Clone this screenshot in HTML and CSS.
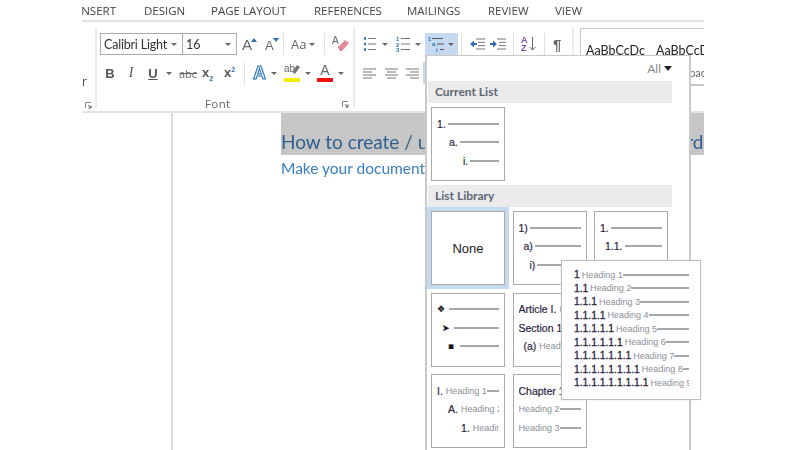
FILE: index.html
```html
<!DOCTYPE html>
<html lang="en">
<head>
    <meta charset="UTF-8">
    <title>Multilevel list</title>
    <link rel="stylesheet" href="styles.css">
</head>
<body>
    <div class="window">
        <div class="tabs">
            <span class="tab tab-insert">INSERT</span>
            <span class="tab tab-design">DESIGN</span>
            <span class="tab tab-layout">PAGE LAYOUT</span>
            <span class="tab tab-refs">REFERENCES</span>
            <span class="tab tab-mail">MAILINGS</span>
            <span class="tab tab-review">REVIEW</span>
            <span class="tab tab-view">VIEW</span>
        </div>

        <div class="ribbon">
            <div class="group group-clip">
                <span class="clip-letter">r</span>
                <svg class="launcher launcher-clip" width="7" height="7" viewBox="0 0 7 7"><path d="M.5 6V.5H6" fill="none" stroke="#888"/><path d="M3 3l3 3M6 3.5V6H3.5" fill="none" stroke="#555"/></svg>
            </div>

            <div class="group group-font">
                <div class="tool-row">
                    <div class="select font-name"><span>Calibri Light</span><i class="caret"></i></div>
                    <div class="select font-size"><span>16</span><i class="caret"></i></div>
                    <span class="tool-a grow">A<svg width="6" height="4" viewBox="0 0 6 4"><path d="M3 0l3 4H0z" fill="#2b6fb5"/></svg></span>
                    <span class="tool-a shrink">A<svg width="6" height="4" viewBox="0 0 6 4"><path d="M3 4L0 0h6z" fill="#2b6fb5"/></svg></span>
                    <i class="sep sep-a"></i>
                    <span class="change-case">Aa</span>
                    <i class="caret caret-case"></i>
                    <i class="sep sep-b"></i>
                    <svg class="eraser" width="18" height="18" viewBox="0 0 18 18">
                        <text x="0" y="9" font-size="10" fill="#666" font-family="Liberation Sans">A</text>
                        <path d="M6 12l7-7 4 3-7 8H8z" fill="#e58a9a"/>
                        <path d="M6 12l3 3" stroke="#c96a7c"/>
                    </svg>
                </div>
                <div class="tool-row row-two">
                    <b class="fmt fmt-b">B</b>
                    <i class="fmt fmt-i">I</i>
                    <u class="fmt fmt-u">U</u>
                    <i class="caret caret-u"></i>
                    <s class="fmt-abc">abc</s>
                    <span class="script sub">x<sub>2</sub></span>
                    <span class="script sup">x<sup>2</sup></span>
                    <i class="sep sep-c"></i>
                    <span class="effect">A</span>
                    <i class="caret caret-fx"></i>
                    <span class="marker">
                        <span class="marker-text">ab</span>
                        <svg class="marker-pen" width="9" height="11" viewBox="0 0 9 11"><path d="M1 8l5-7 3 2-5 7z" fill="#777"/></svg>
                        <i class="bar bar-yellow"></i>
                    </span>
                    <i class="caret caret-marker"></i>
                    <span class="marker marker-font">
                        <span class="letter-a">A</span>
                        <i class="bar bar-red"></i>
                    </span>
                    <i class="caret caret-color"></i>
                </div>
                <div class="group-foot">
                    <span class="group-label">Font</span>
                    <svg class="launcher" width="7" height="7" viewBox="0 0 7 7"><path d="M.5 6V.5H6" fill="none" stroke="#888"/><path d="M3 3l3 3M6 3.5V6H3.5" fill="none" stroke="#555"/></svg>
                </div>
            </div>

            <div class="group group-para">
                <div class="tool-row">
                    <svg class="list-bullets" width="13" height="16" viewBox="0 0 13 16">
                        <path d="M1 2.500h2M1 8h2M1 13.500h2" stroke="#2b6fb5" stroke-width="2.400"/>
                        <path d="M5 2.500h8M5 8h8M5 13.500h8" stroke="#777"/>
                    </svg>
                    <i class="caret caret-bul"></i>
                    <svg class="list-numbers" width="14" height="16" viewBox="0 0 14 16" font-family="Liberation Sans" font-size="6" font-weight="bold" fill="#2b6fb5">
                        <text x="0" y="5">1</text><text x="0" y="10.500">2</text><text x="0" y="16">3</text>
                        <path d="M5 2.500h9M5 8h9M5 13.500h9" stroke="#777"/>
                    </svg>
                    <i class="caret caret-num"></i>
                    <div class="multilevel">
                        <svg width="20" height="18" viewBox="0 0 20 18" font-family="Liberation Sans" font-size="6" font-weight="bold" fill="#2b6fb5">
                            <text x="0" y="6">1</text><text x="4" y="11">a</text><text x="8" y="17">i</text>
                            <path d="M4 3.500h11M9 9h7M12 14.500h4" stroke="#555"/>
                        </svg>
                        <i class="caret"></i>
                    </div>
                    <i class="sep sep-d"></i>
                    <svg class="outdent" width="15" height="12" viewBox="0 0 15 12">
                        <path d="M6 1h9M8 4.300h7M8 7.600h7M6 11h9" stroke="#777"/>
                        <path d="M0 6l4-3.500V5h3v2H4v2.500z" fill="#2b6fb5"/>
                    </svg>
                    <svg class="indent" width="16" height="12" viewBox="0 0 16 12">
                        <path d="M7 1h9M9 4.300h7M9 7.600h7M7 11h9" stroke="#777"/>
                        <path d="M7 6L3 2.500V5H0v2h3v2.500z" fill="#2b6fb5"/>
                    </svg>
                    <i class="sep sep-e"></i>
                    <span class="sort"><span class="sort-letters">A<br>Z</span>
                        <svg width="7" height="14" viewBox="0 0 7 14"><path d="M3.500 0v13M.5 10l3 3 3-3" fill="none" stroke="#666"/></svg>
                    </span>
                    <i class="sep sep-f"></i>
                    <span class="pilcrow">¶</span>
                </div>
                <div class="tool-row row-two">
                    <svg class="align" width="13" height="11" viewBox="0 0 13 11"><path d="M0 1h13M0 4h9M0 7h13M0 10h9" stroke="#777"/></svg>
                    <svg class="align align-center" width="13" height="11" viewBox="0 0 13 11"><path d="M0 1h13M2 4h9M0 7h13M2 10h9" stroke="#777"/></svg>
                    <svg class="align align-right" width="13" height="11" viewBox="0 0 13 11"><path d="M0 1h13M4 4h9M0 7h13M4 10h9" stroke="#777"/></svg>
                    <i class="justify"></i>
                </div>
            </div>

            <div class="styles">
                <div class="style-samples"><span>AaBbCcDc</span><span>AaBbCcDc</span></div>
                <div class="style-names">No Spacing</div>
            </div>
        </div>

        <div class="workspace">
            <div class="page">
                <h1 class="doc-title">How to create / use multi-level lists in Office Word</h1>
                <p class="doc-subtitle">Make your document look professional</p>
            </div>
        </div>

        <div class="gallery">
            <div class="gallery-filter">All <i class="caret caret-all"></i></div>
            <div class="gallery-head">Current List</div>
            <div class="thumb thumb-current">
                <div class="thumb-row"><span class="num">1.</span><i class="rule"></i></div>
                <div class="thumb-row in-1"><span class="num">a.</span><i class="rule"></i></div>
                <div class="thumb-row in-2"><span class="num">i.</span><i class="rule"></i></div>
            </div>
            <div class="gallery-head">List Library</div>
            <div class="thumb-grid">
                <div class="thumb thumb-none">None</div>
                <div class="thumb">
                    <div class="thumb-row"><span class="num">1)</span><i class="rule"></i></div>
                    <div class="thumb-row in-s1"><span class="num">a)</span><i class="rule"></i></div>
                    <div class="thumb-row in-s2"><span class="num">i)</span><i class="rule"></i></div>
                </div>
                <div class="thumb">
                    <div class="thumb-row"><span class="num">1.</span><i class="rule"></i></div>
                    <div class="thumb-row in-s1"><span class="num">1.1.</span><i class="rule"></i></div>
                    <div class="thumb-row in-s2"><span class="num">1.1.1.</span><i class="rule"></i></div>
                </div>
                <div class="thumb">
                    <div class="thumb-row"><span class="num sym">❖</span><i class="rule"></i></div>
                    <div class="thumb-row in-s1"><span class="num sym">➤</span><i class="rule"></i></div>
                    <div class="thumb-row in-s2"><span class="num sym">▪</span><i class="rule"></i></div>
                </div>
                <div class="thumb">
                    <div class="thumb-row"><span class="num">Article I.</span><span class="hd">Heading 1</span></div>
                    <div class="thumb-row"><span class="num">Section 1.01</span><span class="hd">Heading 2</span></div>
                    <div class="thumb-row in-s1"><span class="num">(a)</span><span class="hd">Heading 3</span></div>
                </div>
                <div class="thumb thumb-empty"></div>
                <div class="thumb">
                    <div class="thumb-row"><span class="num">I.</span><span class="hd">Heading 1</span><i class="rule"></i></div>
                    <div class="thumb-row in-3"><span class="num">A.</span><span class="hd">Heading 2</span></div>
                    <div class="thumb-row in-4"><span class="num">1.</span><span class="hd">Heading 3</span></div>
                </div>
                <div class="thumb">
                    <div class="thumb-row"><span class="num">Chapter 1</span><span class="hd">Heading 1</span></div>
                    <div class="thumb-row"><span class="hd">Heading 2</span><i class="rule"></i></div>
                    <div class="thumb-row"><span class="hd">Heading 3</span><i class="rule"></i></div>
                </div>
            </div>
        </div>

        <div class="preview">
            <div class="preview-row"><b>1</b><span>Heading 1</span><i></i></div>
            <div class="preview-row"><b>1.1</b><span>Heading 2</span><i></i></div>
            <div class="preview-row"><b>1.1.1</b><span>Heading 3</span><i></i></div>
            <div class="preview-row"><b>1.1.1.1</b><span>Heading 4</span><i></i></div>
            <div class="preview-row"><b>1.1.1.1.1</b><span>Heading 5</span><i></i></div>
            <div class="preview-row"><b>1.1.1.1.1.1</b><span>Heading 6</span><i></i></div>
            <div class="preview-row"><b>1.1.1.1.1.1.1</b><span>Heading 7</span><i></i></div>
            <div class="preview-row"><b>1.1.1.1.1.1.1.1</b><span>Heading 8</span><i></i></div>
            <div class="preview-row"><b>1.1.1.1.1.1.1.1.1</b><span>Heading 9</span><i></i></div>
        </div>
    </div>
</body>
</html>
```
FILE: styles.css
```css
:root {
    --line: #dcdcdc;
    --frame: #c9c9c9;
    --icon: #666;
    --blue: #2b6fb5;
    --hover: #c5d9f1;
}

* {
    margin: 0;
    padding: 0;
    box-sizing: border-box;
}

html, body {
    height: 100%;
    overflow: hidden;
    background: white;
}

/* App window, cropped on both sides */
.window {
    position: relative;
    width: 622px;
    height: 450px;
    margin-left: 82px;
    overflow: hidden;
    font-family: 'Open Sans', sans-serif;
    color: #444;
    filter: blur(0.35px);
}

/* Tabs */
.tabs {
    display: flex;
    height: 22px;
    border-bottom: 2px solid #e2e2e2;
    font-size: 11.5px;
    line-height: 21px;
    white-space: nowrap;
}

.tab-insert { width: 62px; overflow: hidden; text-indent: -4px; }
.tab-design { width: 67px; }
.tab-layout { width: 103px; }
.tab-refs { width: 93px; }
.tab-mail { width: 81px; }
.tab-review { width: 67px; }

/* Ribbon */
.ribbon {
    display: flex;
    height: 91px;
    border-bottom: 2px solid #e2e2e2;
    padding-top: 5px;
}

.group {
    position: relative;
    border-right: 2px solid #ececec;
    height: 81px;
}

.group-clip { width: 15px; font-size: 12px; }
.clip-letter { display: block; margin-top: 47px; line-height: 16px; }
.launcher-clip { display: block; margin: 12px 0 0 3px; }

.group-font { width: 258px; padding: 6px 0 0 3px; }
.group-para { width: 219px; padding: 6px 0 0 8px; }

.tool-row {
    display: flex;
    align-items: center;
    height: 22px;
}

.row-two { margin-top: 7px; }

.caret {
    display: block;
    flex: none;
    width: 0;
    height: 0;
    border: 3px solid transparent;
    border-top: 3.5px solid var(--icon);
    border-bottom: 0;
}

.sep {
    display: block;
    flex: none;
    width: 1px;
    height: 22px;
    background: #e0e0e0;
}

/* Font group */
.select {
    display: flex;
    align-items: center;
    justify-content: space-between;
    height: 22px;
    border: 1px solid #ababab;
    padding: 0 5px 0 3px;
    font-family: Lato, sans-serif;
    font-size: 12.5px;
    color: #333;
    white-space: nowrap;
}

.font-name { width: 83px; letter-spacing: -0.2px; }
.font-size { width: 54px; border-left: 0; padding-left: 3px; }

.tool-a {
    display: flex;
    align-items: flex-start;
    font-family: 'Liberation Sans', sans-serif;
    color: #666;
}

.grow { font-size: 15px; margin-left: 5px; width: 16px; }
.shrink { font-size: 13px; margin-left: 7px; width: 14px; padding-top: 3px; }
.tool-a svg { flex: none; margin-top: 2px; }
.grow svg { margin-left: -1px; }
.shrink svg { margin-left: -1px; margin-top: 0; }

.sep-a { margin-left: 4px; }
.change-case { width: 16px; margin-left: 7px; font-size: 13px; color: #666; line-height: 20px; }
.caret-case { margin-left: 2px; }
.sep-b { margin-left: 9px; }
.eraser { flex: none; margin-left: 7px; }

.fmt {
    width: 12px;
    text-align: center;
    font-family: 'Liberation Sans', sans-serif;
    font-size: 13px;
    color: #555;
}

.fmt-b { margin-left: 4px; }
.fmt-i { margin-left: 9px; font-family: 'Liberation Serif', serif; font-size: 14px; }
.fmt-u { margin-left: 10px; font-weight: bold; }
.caret-u { margin-left: 7px; }
.fmt-abc { width: 16px; margin-left: 7px; font-size: 11px; color: #666; }

.script {
    width: 13px;
    font-family: 'Liberation Sans', sans-serif;
    font-size: 13px;
    font-weight: bold;
    color: #555;
    line-height: 16px;
}

.script sub, .script sup { font-size: 7px; line-height: 0; color: var(--blue); }
.sub { margin-left: 7px; }
.sup { margin-left: 9px; width: 12px; }
.sep-c { margin-left: 8px; }

.effect {
    width: 14px;
    margin-left: 8px;
    font-family: 'Liberation Sans', sans-serif;
    font-size: 18px;
    font-weight: bold;
    line-height: 20px;
    color: #dfeaf7;
    -webkit-text-stroke: 1px var(--blue);
}

.caret-fx { margin-left: 4px; }

.marker {
    position: relative;
    display: block;
    flex: none;
    width: 16px;
    height: 20px;
    margin-left: 7px;
}

.marker-text {
    display: block;
    font-family: 'Liberation Sans', sans-serif;
    font-size: 10px;
    line-height: 12px;
    color: #666;
}

.marker-pen { position: absolute; top: 1px; right: 0; }

.bar {
    position: absolute;
    left: 0;
    bottom: 1px;
    width: 16px;
    height: 4px;
}

.bar-yellow { background: #f5ee00; }
.bar-red { background: #ee1111; }
.caret-marker { margin-left: 5px; }
.marker-font { margin-left: 6px; }
.letter-a {
    display: block;
    text-align: center;
    font-family: 'Liberation Sans', sans-serif;
    font-size: 14px;
    line-height: 15px;
    color: #666;
}
.caret-color { margin-left: 5px; }

.group-foot {
    display: flex;
    align-items: center;
    justify-content: space-between;
    height: 14px;
    margin-top: 13px;
    padding: 0 4px 0 105px;
    line-height: 14px;
}

.group-label { font-size: 11.5px; letter-spacing: 0.4px; color: #666; }

/* Paragraph group */
.group-para svg { flex: none; }
.caret-bul { margin-left: 6px; }
.list-numbers { margin-left: 8px; }
.caret-num { margin-left: 5px; }

.multilevel {
    display: flex;
    align-items: center;
    flex: none;
    width: 33px;
    height: 22px;
    margin-left: 4px;
    padding-left: 3px;
    background: var(--hover);
}

.sep-d { margin-left: 3px; }
.group-para .outdent { margin-left: 8px; }
.group-para .indent { margin-left: 5px; }
.sep-e { margin-left: 7px; }

.sort {
    display: flex;
    align-items: center;
    flex: none;
    width: 16px;
    margin-left: 7px;
}

.sort-letters {
    font-family: 'Liberation Sans', sans-serif;
    font-size: 9px;
    font-weight: bold;
    line-height: 8px;
    color: #7b4fb0;
    margin-right: 1px;
}

.sep-f { margin-left: 7px; }
.pilcrow { margin-left: 8px; font-family: 'Liberation Sans', sans-serif; font-size: 15px; font-weight: bold; color: #666; }
.group-para .align-center { margin-left: 9px; }
.group-para .align-right { margin-left: 8px; }
.justify { display: block; flex: none; width: 22px; height: 22px; margin-left: 4px; background: var(--hover); }

/* Styles gallery */
.styles {
    flex: 1;
    height: 58px;
    margin: 1px 0 0 6px;
    border: 1px solid #c8c8c8;
    border-right: 0;
    border-bottom: 2px solid #c8c8c8;
    padding: 14px 0 0 5px;
    font-family: Lato, sans-serif;
    color: #222;
    white-space: nowrap;
    overflow: hidden;
}

.style-samples { display: flex; gap: 11px; font-size: 12.5px; }
.style-names { margin: 8px 0 0 80px; font-size: 11px; color: #666; }

/* Document */
.workspace { height: 337px; }

.page {
    width: 519px;
    height: 100%;
    margin-left: 89px;
    border-left: 2px solid var(--line);
    border-right: 2px solid var(--line);
    padding-left: 108px;
    white-space: nowrap;
    font-family: Lato, sans-serif;
}

.doc-title {
    width: 423px;
    height: 42px;
    padding-top: 17px;
    font-size: 19px;
    font-weight: 400;
    line-height: 24px;
    color: #2e5d8f;
    background: #c6c6c6;
    overflow: hidden;
}

.doc-subtitle {
    margin-top: 1px;
    font-size: 15.5px;
    line-height: 24px;
    color: #3a7fc0;
}

/* List gallery dropdown */
.gallery {
    position: absolute;
    left: 343px;
    top: 55px;
    width: 266px;
    height: 400px;
    background: white;
    border: 2px solid var(--frame);
    border-top-width: 1px;
    font-family: 'Liberation Sans', sans-serif;
}

.gallery-filter {
    display: flex;
    align-items: center;
    justify-content: flex-end;
    gap: 3px;
    height: 25px;
    padding-right: 17px;
    font-family: Lato, sans-serif;
    font-size: 12px;
    color: #888;
}

.caret-all {
    border-width: 4px;
    border-top-width: 5px;
    border-bottom: 0;
    border-top-color: #222;
}

.gallery-head {
    width: 244px;
    height: 22px;
    margin: 4px 0 4px 1px;
    padding-left: 7px;
    background: #ebebeb;
    font-family: Lato, sans-serif;
    font-size: 12px;
    font-weight: bold;
    line-height: 22px;
    color: #5d6773;
}

.gallery-filter + .gallery-head { margin-top: 0; }

.thumb {
    display: flex;
    flex-direction: column;
    gap: 5.5px;
    width: 74px;
    height: 74px;
    border: 1px solid #aaa;
    padding: 9px 5px 0;
    font-size: 10.5px;
    color: #2d2440;
    white-space: nowrap;
    overflow: hidden;
}

.thumb-current { margin-left: 4px; }

.thumb-grid {
    display: grid;
    grid-template-columns: repeat(3, 74px);
    gap: 7.5px;
    margin-left: 4px;
}

.thumb-none {
    align-items: center;
    justify-content: center;
    padding: 0;
    box-shadow: 0 0 0 4px var(--hover);
    font-size: 13px;
    color: #222;
    overflow: visible;
}

.thumb-empty { visibility: hidden; }

.thumb-row {
    display: flex;
    align-items: center;
    flex: none;
    height: 13px;
    overflow: hidden;
}

.in-1 { padding-left: 12px; }
.in-2 { padding-left: 26px; }
.in-3 { padding-left: 11px; }
.in-4 { padding-left: 24px; }
.in-s1 { padding-left: 5px; }
.in-s2 { padding-left: 11px; }

.num {
    flex: none;
    margin-right: 2px;
    -webkit-text-stroke: 0.2px #2d2440;
}

.sym { width: 10px; font-family: 'DejaVu Sans', sans-serif; font-size: 9px; color: #111; }
.hd { flex: none; margin-left: 1px; font-size: 9px; color: #8a8f99; }
.hd:first-child { margin-left: 0; }

.rule {
    display: block;
    flex: 1;
    min-width: 6px;
    height: 2px;
    background: #a6a6a6;
}

/* Hover preview */
.preview {
    position: absolute;
    left: 479px;
    top: 260px;
    width: 140px;
    height: 140px;
    padding: 7px 11px 0 12px;
    background: white;
    border: 1px solid #bdbdbd;
    box-shadow: 0 0 1px #ccc;
    font-family: 'Liberation Sans', sans-serif;
    white-space: nowrap;
}

.preview-row {
    display: flex;
    align-items: center;
    height: 13.5px;
    overflow: hidden;
}

.preview-row b {
    flex: none;
    margin-right: 2px;
    font-size: 10.3px;
    font-weight: normal;
    -webkit-text-stroke: 0.3px #2d2440;
    color: #2d2440;
}

.preview-row span {
    flex: none;
    font-size: 9px;
    color: #8a8f99;
}

.preview-row i {
    display: block;
    flex: 1;
    height: 2px;
    background: #a6a6a6;
}
```
